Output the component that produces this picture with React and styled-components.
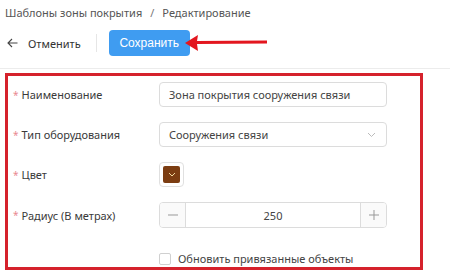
import React from "react";
import styled, { createGlobalStyle } from "styled-components";

const Global = createGlobalStyle`
  html, body { margin: 0; padding: 0; background: #fff; }
  body { font-family: "Noto Sans", "Open Sans", sans-serif; color: #333; }
  * { box-sizing: border-box; }
`;

const Page = styled.div`
  width: 450px;
  height: 276px;
  overflow: hidden;
  position: relative;
`;

const Breadcrumb = styled.div`
  display: flex;
  align-items: center;
  height: 24px;
  padding-left: 5px;
  font-size: 11px;
  color: #555;
`;

const Sep = styled.span`
  margin: 0 8px;
  color: #777;
`;

const Toolbar = styled.div`
  position: relative;
  display: flex;
  align-items: center;
  height: 26px;
  margin-top: 6px;
  padding-left: 7px;
`;

const Divider = styled.div`
  height: 1px;
  background: #ececec;
  margin-top: 12px;
`;

const BackButton = styled.button`
  display: flex;
  align-items: center;
  gap: 10px;
  border: none;
  background: none;
  padding: 0;
  font: inherit;
  font-size: 11px;
  color: #333;
`;

const VLine = styled.div`
  width: 1px;
  height: 18px;
  background: #e6e6e6;
  margin: 0 12px 0 15px;
`;

const Primary = styled.button`
  width: 81px;
  height: 26px;
  border: none;
  border-radius: 4px;
  background: #3f9cf1;
  color: #fff;
  font-family: "Liberation Sans", Arial, sans-serif;
  font-size: 12px;
  padding: 0;
`;

const Arrow = styled.svg`
  position: absolute;
  left: 183px;
  top: 3px;
`;

const Frame = styled.div`
  margin: 4px 0 0 5px;
  width: 418px;
  height: 197px;
  border: 3px solid #d5222c;
  padding: 6px 0 0 5px;
`;

const Grid = styled.div`
  display: grid;
  grid-template-columns: 146px 228px;
  row-gap: 15px;
  align-items: center;
`;

const Label = styled.div`
  font-size: 11px;
  color: #3a3a3a;
  display: flex;
  align-items: center;
  height: 25px;
`;

const Star = styled.span`
  color: #e98a90;
  margin-right: 3px;
  font-size: 10px;
`;

const Input = styled.div`
  height: 25px;
  border: 1px solid #dcdcdc;
  border-radius: 4px;
  display: flex;
  align-items: center;
  padding-left: 9px;
  font-size: 11px;
  color: #444;
  justify-content: space-between;
`;

const Chevron = styled.svg`
  margin-right: 10px;
`;

const ColorBox = styled.div`
  width: 25px;
  height: 25px;
  border: 1px solid #e0e0e0;
  border-radius: 4px;
  padding: 3px;
`;

const Swatch = styled.div`
  width: 100%;
  height: 100%;
  background: #7c3d12;
  border-radius: 2px;
  display: flex;
  align-items: center;
  justify-content: center;
`;

const NumberBox = styled.div`
  height: 26px;
  border: 1px solid #dcdcdc;
  border-radius: 4px;
  display: flex;
  overflow: hidden;
`;

const Step = styled.div`
  width: 26px;
  background: #fafafa;
  display: flex;
  align-items: center;
  justify-content: center;
  ${(p) => (p.$right ? "border-left" : "border-right")}: 1px solid #dcdcdc;
`;

const NumberValue = styled.div`
  flex: 1;
  display: flex;
  align-items: center;
  justify-content: center;
  font-size: 11px;
  color: #444;
`;

const CheckRow = styled.label`
  grid-column: 2;
  display: flex;
  align-items: center;
  gap: 7px;
  margin-top: 8px;
  font-size: 11px;
  color: #444;
`;

const Check = styled.span`
  width: 12px;
  height: 12px;
  border: 1px solid #d0d0d0;
  border-radius: 2px;
  background: #fff;
`;

const Req = ({ children }) => (
  <Label>
    <Star>*</Star>
    {children}
  </Label>
);

export default function App() {
  return (
    <Page>
      <Global />
      <Breadcrumb>
        Шаблоны зоны покрытия<Sep>/</Sep>Редактирование
      </Breadcrumb>
      <Toolbar>
        <BackButton>
          <svg width="11" height="10" viewBox="0 0 11 10">
            <path d="M10.5 5H1M5 1L1 5l4 4" fill="none" stroke="#444" strokeWidth="1.1" />
          </svg>
          Отменить
        </BackButton>
        <VLine />
        <Primary>Сохранить</Primary>
        <Arrow width="86" height="20" viewBox="0 0 86 20">
          <path d="M2 10 L15 2 L14 8 L84 7.5 L84 10.5 L14 11 L15 18 Z" fill="#e3161f" />
        </Arrow>
      </Toolbar>
      <Divider />
      <Frame>
        <Grid>
          <Req>Наименование</Req>
          <Input>Зона покрытия сооружения связи</Input>
          <Req>Тип оборудования</Req>
          <Input>
            Сооружения связи
            <Chevron width="9" height="6" viewBox="0 0 9 6">
              <path d="M1 1l3.5 3.5L8 1" fill="none" stroke="#bbb" strokeWidth="1" />
            </Chevron>
          </Input>
          <Req>Цвет</Req>
          <ColorBox>
            <Swatch>
              <svg width="8" height="5" viewBox="0 0 8 5">
                <path d="M1 1l3 3 3-3" fill="none" stroke="#f0d9a0" strokeWidth="1" />
              </svg>
            </Swatch>
          </ColorBox>
          <Req>Радиус (В метрах)</Req>
          <NumberBox>
            <Step>
              <svg width="10" height="2" viewBox="0 0 10 2">
                <path d="M0 1h10" stroke="#999" strokeWidth="1" />
              </svg>
            </Step>
            <NumberValue>250</NumberValue>
            <Step $right>
              <svg width="10" height="10" viewBox="0 0 10 10">
                <path d="M0 5h10M5 0v10" stroke="#999" strokeWidth="1" />
              </svg>
            </Step>
          </NumberBox>
          <CheckRow>
            <Check />
            Обновить привязанные объекты
          </CheckRow>
        </Grid>
      </Frame>
    </Page>
  );
}
